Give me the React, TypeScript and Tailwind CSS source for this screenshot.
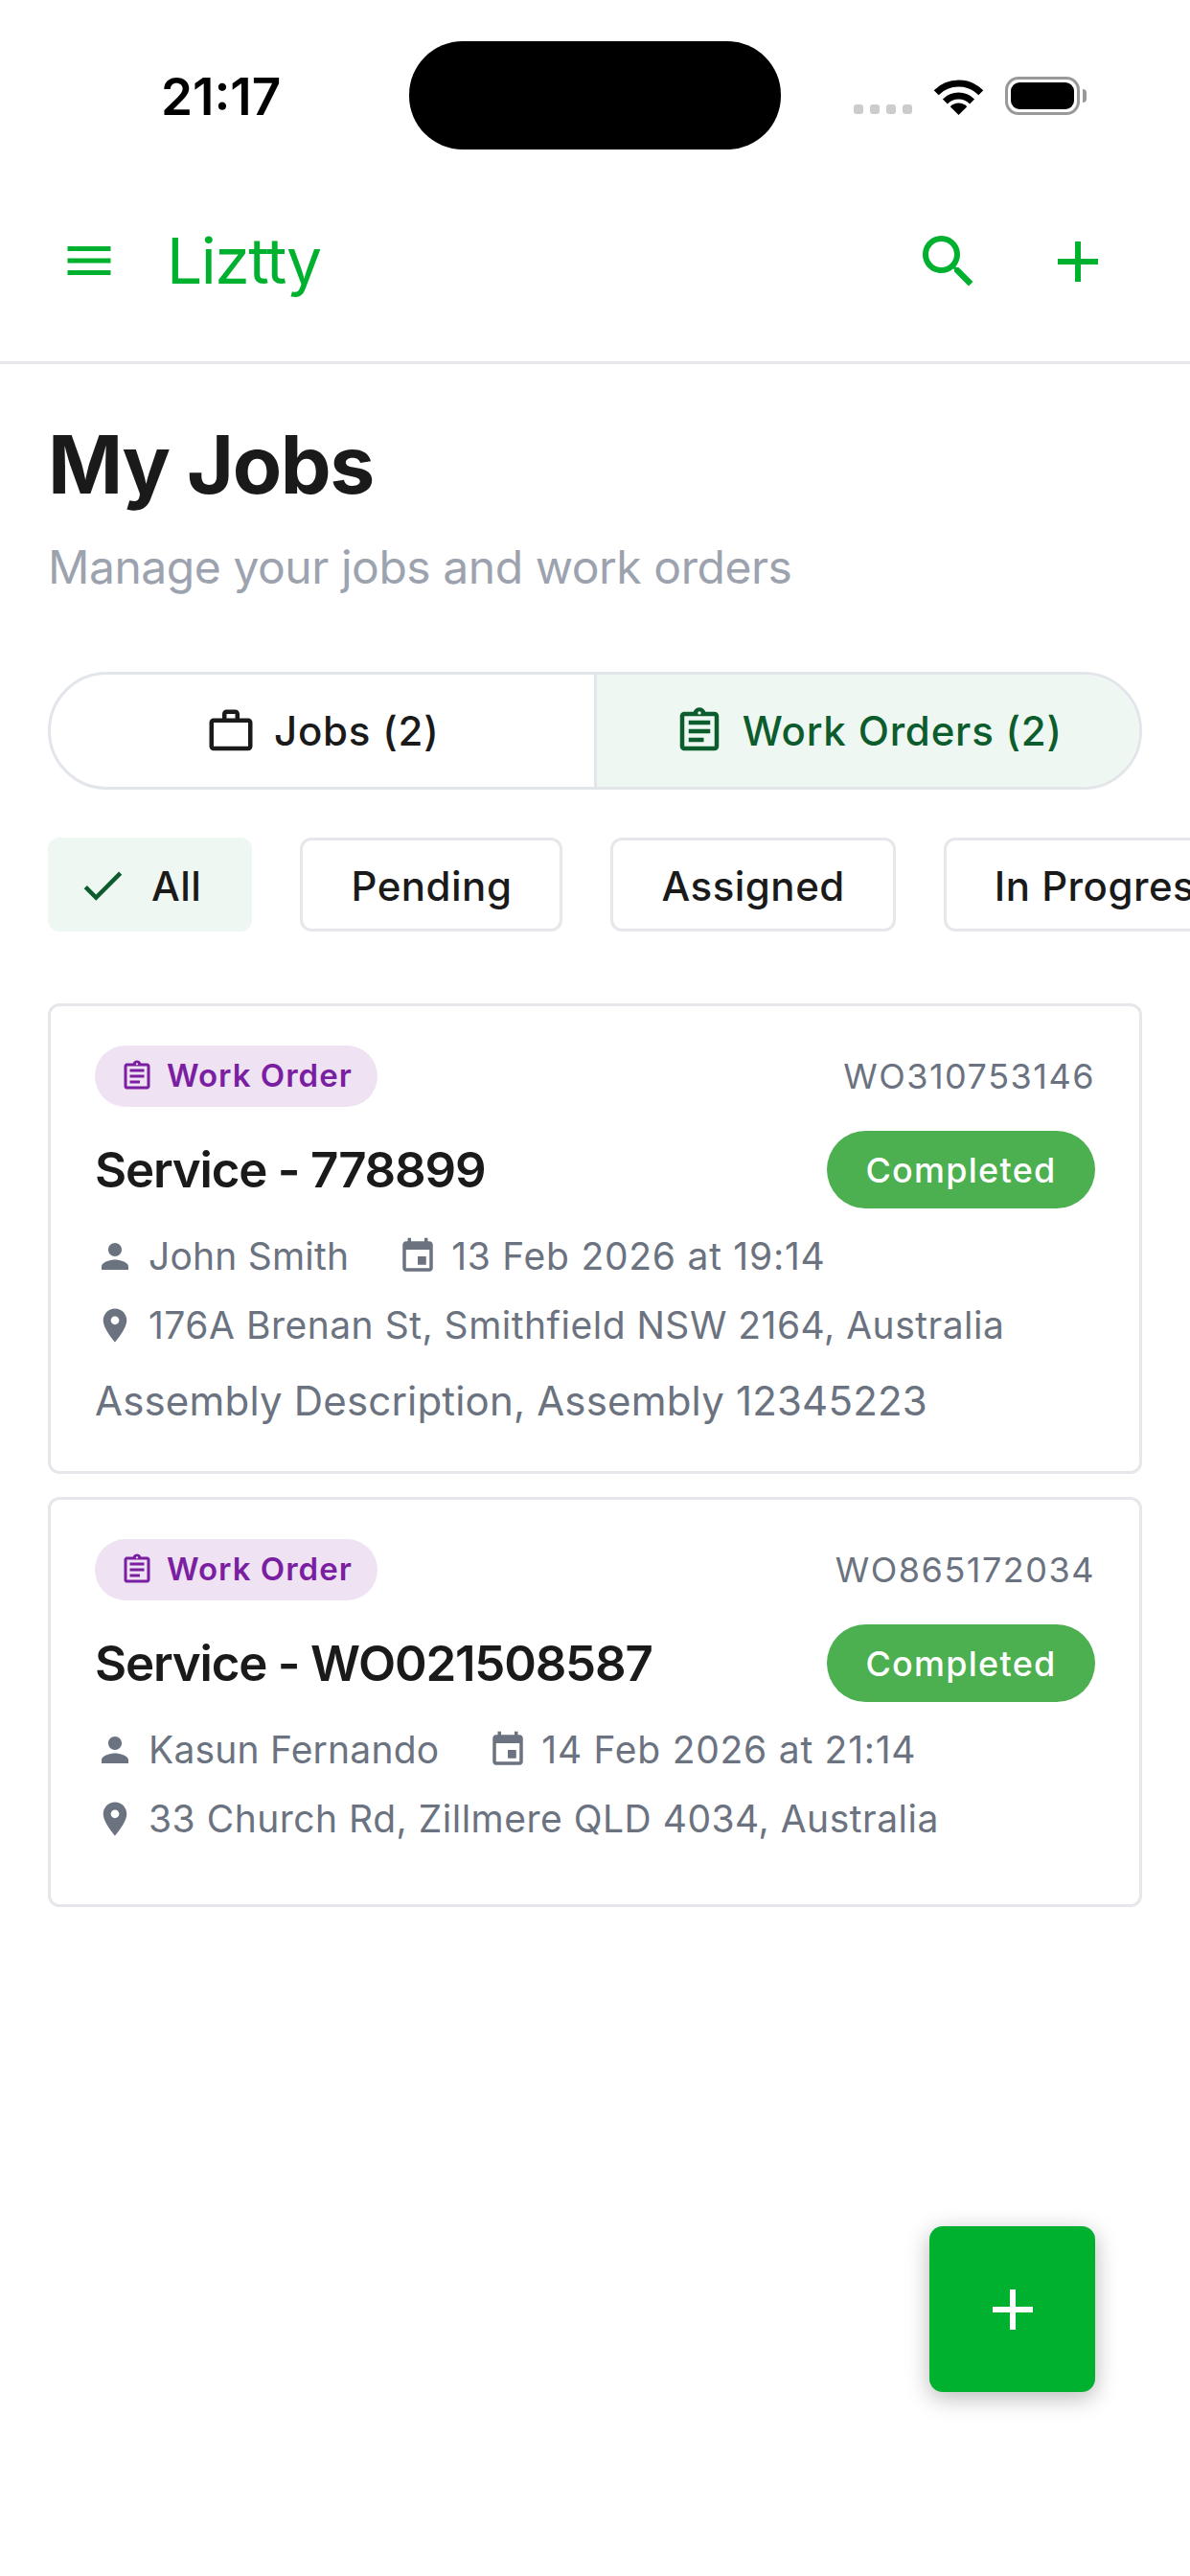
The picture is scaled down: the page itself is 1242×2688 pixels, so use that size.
import type { ReactNode } from "react";

const ICONS = {
  menu: "M3 18h18v-2H3v2zm0-5h18v-2H3v2zm0-7v2h18V6H3z",
  search:
    "M15.5 14h-.79l-.28-.27C15.41 12.59 16 11.11 16 9.5 16 5.91 13.09 3 9.5 3S3 5.91 3 9.5 5.91 16 9.5 16c1.61 0 3.09-.59 4.23-1.57l.27.28v.79l5 4.99L20.49 19l-4.99-5zm-6 0C7.01 14 5 11.99 5 9.5S7.01 5 9.5 5 14 7.01 14 9.5 11.99 14 9.5 14z",
  add: "M19 13h-6v6h-2v-6H5v-2h6V5h2v6h6v2z",
  work: "M20 6h-4V4c0-1.11-.89-2-2-2h-4c-1.11 0-2 .89-2 2v2H4c-1.11 0-1.99.89-1.99 2L2 19c0 1.11.89 2 2 2h16c1.11 0 2-.89 2-2V8c0-1.11-.89-2-2-2zm-6 0h-4V4h4v2zm6 13H4V8h16v11z",
  assignment:
    "M19 3h-4.18C14.4 1.84 13.3 1 12 1c-1.3 0-2.4.84-2.82 2H5c-.14 0-.27.01-.4.04-.39.08-.74.28-1.01.55-.18.18-.33.4-.43.64-.1.23-.16.49-.16.77v14c0 .27.06.54.16.78s.25.45.43.64c.27.27.62.47 1.01.55.13.02.26.03.4.03h14c1.1 0 2-.9 2-2V5c0-1.1-.9-2-2-2zm-7-.25c.41 0 .75.34.75.75s-.34.75-.75.75-.75-.34-.75-.75.34-.75.75-.75zM19 19H5V5h14v14zM7 15h7v2H7zm0-4h10v2H7zm0-4h10v2H7z",
  check: "M9 16.17L4.83 12l-1.41 1.41L9 19 21 7l-1.41-1.41z",
  person:
    "M12 12c2.21 0 4-1.79 4-4s-1.79-4-4-4-4 1.79-4 4 1.79 4 4 4zm0 2c-2.67 0-8 1.34-8 4v2h16v-2c0-2.66-5.33-4-8-4z",
  event:
    "M17 12h-5v5h5v-5zM16 1v2H8V1H6v2H5c-1.11 0-1.99.9-1.99 2L3 19c0 1.1.89 2 2 2h14c1.1 0 2-.9 2-2V5c0-1.1-.9-2-2-2h-1V1h-2zm3 18H5V8h14v11z",
  place:
    "M12 2C8.13 2 5 5.13 5 9c0 5.25 7 13 7 13s7-7.75 7-13c0-3.87-3.13-7-7-7zm0 9.5c-1.38 0-2.5-1.12-2.5-2.5s1.12-2.5 2.5-2.5 2.5 1.12 2.5 2.5-1.12 2.5-2.5 2.5z",
};

function Icon({ name, className }: { name: keyof typeof ICONS; className: string }) {
  return (
    <svg viewBox="0 0 24 24" fill="currentColor" className={`shrink-0 ${className}`}>
      <path d={ICONS[name]} />
    </svg>
  );
}

function StatusBar() {
  return (
    <div className="relative flex h-[180px] items-start">
      <div className="ml-[168px] mt-[70px] text-[53px] leading-[62px] font-semibold text-black">21:17</div>
      <div className="absolute left-[427px] top-[43px] h-[113px] w-[388px] rounded-[56px] bg-black" />
      <div className="ml-auto mr-[115px] mt-[80px] flex items-end">
        <div className="mb-[1px] flex gap-[7px]">
          <span className="h-[10px] w-[10px] rounded-[3px] bg-[#cccccc]" />
          <span className="h-[10px] w-[10px] rounded-[3px] bg-[#cccccc]" />
          <span className="h-[10px] w-[10px] rounded-[3px] bg-[#cccccc]" />
          <span className="h-[10px] w-[10px] rounded-[3px] bg-[#cccccc]" />
        </div>
        <svg viewBox="0 0 53 39" className="ml-[22px] h-[39px] w-[53px]">
          <path d="M3.2 15.7A33 33 0 0 1 49.8 15.7" fill="none" stroke="#000" strokeWidth="7" />
          <path d="M12.4 24.9A20 20 0 0 1 40.6 24.9" fill="none" stroke="#000" strokeWidth="7" />
          <path d="M26.5 39L17.7 30.2A12.5 12.5 0 0 1 35.3 30.2Z" fill="#000" />
        </svg>
        <div className="relative ml-[22px] flex h-[40px] w-[78px] items-center justify-center rounded-[14px] border-[3px] border-[#999999]">
          <div className="h-[28px] w-[66px] rounded-[9px] bg-black" />
          <div className="absolute -right-[10px] top-[10px] h-[14px] w-[4px] rounded-r-[4px] bg-[#999999]" />
        </div>
      </div>
    </div>
  );
}

function Header() {
  return (
    <div className="flex h-[200px] items-start border-b-[3px] border-[#e5e7eb] pt-[57px] text-[#00b12f]">
      <Icon name="menu" className="ml-[63px] mt-[5px] h-[60px] w-[60px]" />
      <div className="ml-[51px] text-[66px] leading-[70px] tracking-[-1.5px]">Liztty</div>
      <Icon name="search" className="ml-auto h-[72px] w-[72px]" />
      <Icon name="add" className="ml-[63px] mr-[81px] h-[72px] w-[72px]" />
    </div>
  );
}

function Chip({ children, active }: { children: ReactNode; active?: boolean }) {
  return (
    <div
      className={`flex h-[98px] shrink-0 items-center rounded-[12px] border-[3px] pt-[2px] text-[42px] font-medium tracking-[0.5px] text-[#1a1a1a] ${
        active ? "border-[#eff7f2] bg-[#eff7f2] pl-[27px] pr-[50px]" : "border-[#e5e7eb] bg-white px-[50px]"
      }`}
    >
      {children}
    </div>
  );
}

function Meta({ icon, children, className }: { icon: keyof typeof ICONS; children: ReactNode; className: string }) {
  return (
    <div className="flex items-center">
      <Icon name={icon} className="h-[42px] w-[42px]" />
      <span className={`ml-[14px] ${className}`}>{children}</span>
    </div>
  );
}

function JobCard({
  code,
  title,
  person,
  date,
  address,
  description,
}: {
  code: string;
  title: string;
  person: string;
  date: string;
  address: string;
  description?: string;
}) {
  return (
    <div className="rounded-[12px] border-[3px] border-[#e5e7eb] bg-white px-[46px] pt-[41px] pb-[48px]">
      <div className="flex h-[64px] items-center justify-between">
        <div className="flex h-[64px] items-center rounded-full bg-[#efe3f3] pl-[26px] pr-[26px] text-[#7b1fa2]">
          <Icon name="assignment" className="h-[36px] w-[36px]" />
          <span className="ml-[13px] text-[33px] font-semibold tracking-[1px]">Work Order</span>
        </div>
        <span className="text-[36px] tracking-[1.5px] text-[#6b7280]">{code}</span>
      </div>
      <div className="mt-[25px] flex h-[81px] items-center justify-between">
        <span className="pt-[2px] text-[51px] font-semibold tracking-[-1.2px] text-[#1a1a1a]">{title}</span>
        <span className="flex h-[81px] w-[280px] items-center justify-center rounded-full bg-[#4caf50] text-[36px] font-medium tracking-[1.25px] text-white">
          Completed
        </span>
      </div>
      <div className="mb-[14px] mt-[23px] flex flex-col gap-[18px] text-[39px] leading-[54px] text-[#6b7280]">
        <div className="flex h-[54px] gap-[51px]">
          <Meta icon="person" className="tracking-[0.2px]">
            {person}
          </Meta>
          <Meta icon="event" className="tracking-[0.75px]">
            {date}
          </Meta>
        </div>
        <div className="flex h-[54px]">
          <Meta icon="place" className="tracking-[0.5px]">
            {address}
          </Meta>
        </div>
      </div>
      {description && (
        <p className="mt-[26px] h-[51px] text-[42px] leading-[51px] tracking-[0.18px] text-[#6b7280]">{description}</p>
      )}
    </div>
  );
}

export default function App() {
  return (
    <div
      className="relative h-[2688px] w-[1242px] overflow-hidden bg-white"
      style={{ fontFamily: '"Inter", "Liberation Sans", sans-serif' }}
    >
      <StatusBar />
      <Header />
      <div className="px-[50px]">
        <h1 className="mt-[54px] text-[84px] leading-[102px] font-bold tracking-[-1.5px] text-[#1a1a1a]">My Jobs</h1>
        <p className="mt-[26px] text-[48px] leading-[60px] tracking-[-0.45px] text-[#9ca3af]">
          Manage your jobs and work orders
        </p>

        <div className="mt-[79px] flex h-[123px] overflow-hidden rounded-[62px] border-[3px] border-[#e2e5ea]">
          <div className="flex flex-1 items-center justify-center border-r-[3px] border-[#e2e5ea] text-[42px] font-medium tracking-[0.8px] text-[#1a1a1a]">
            <Icon name="work" className="h-[54px] w-[54px]" />
            <span className="ml-[18px]">Jobs (2)</span>
          </div>
          <div className="flex flex-1 items-center justify-center bg-[#eff7f2] text-[42px] font-medium tracking-[0.8px] text-[#0d5c2e]">
            <Icon name="assignment" className="h-[54px] w-[54px]" />
            <span className="ml-[18px]">Work Orders (2)</span>
          </div>
        </div>

        <div className="-mr-[50px] mt-[50px] flex gap-[50px] overflow-hidden">
          <Chip active>
            <Icon name="check" className="h-[54px] w-[54px] text-[#0d5c2e]" />
            <span className="ml-[24px]">All</span>
          </Chip>
          <Chip>Pending</Chip>
          <Chip>Assigned</Chip>
          <Chip>In Progress</Chip>
        </div>

        <div className="mt-[75px] flex flex-col gap-[24px]">
          <JobCard
            code="WO310753146"
            title="Service - 778899"
            person="John Smith"
            date="13 Feb 2026 at 19:14"
            address="176A Brenan St, Smithfield NSW 2164, Australia"
            description="Assembly Description, Assembly 12345223"
          />
          <JobCard
            code="WO865172034"
            title="Service - WO021508587"
            person="Kasun Fernando"
            date="14 Feb 2026 at 21:14"
            address="33 Church Rd, Zillmere QLD 4034, Australia"
          />
        </div>
      </div>
      <button className="absolute left-[970px] top-[2323px] flex h-[173px] w-[173px] items-center justify-center rounded-[14px] bg-[#00b12f] text-white shadow-[0_6px_24px_rgba(0,0,0,0.28)]">
        <Icon name="add" className="h-[72px] w-[72px]" />
      </button>
    </div>
  );
}
